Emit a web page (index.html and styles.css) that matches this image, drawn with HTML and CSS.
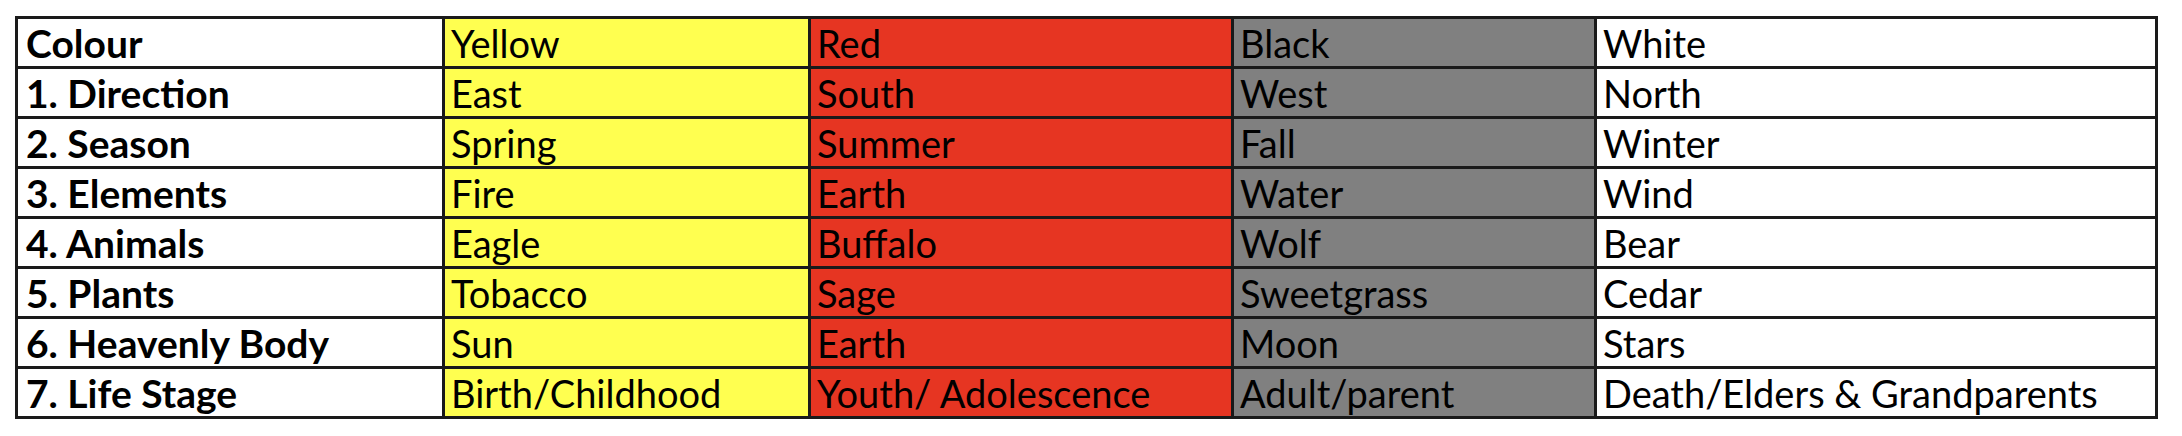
FILE: index.html
```html
<!DOCTYPE html>
<html>
<head>
<meta charset="utf-8">
<link rel="stylesheet" href="styles.css">
</head>
<body>
<table class="grid">
  <colgroup>
    <col class="c-head">
    <col class="c-yellow">
    <col class="c-red">
    <col class="c-black">
    <col class="c-white">
  </colgroup>
  <tbody>
    <tr><th>Colour</th><td class="y">Yellow</td><td class="r">Red</td><td class="k">Black</td><td class="w">White</td></tr>
    <tr><th>1. Direction</th><td class="y">East</td><td class="r">South</td><td class="k">West</td><td class="w">North</td></tr>
    <tr><th>2. Season</th><td class="y">Spring</td><td class="r">Summer</td><td class="k">Fall</td><td class="w">Winter</td></tr>
    <tr><th>3. Elements</th><td class="y">Fire</td><td class="r">Earth</td><td class="k">Water</td><td class="w">Wind</td></tr>
    <tr><th>4. Animals</th><td class="y">Eagle</td><td class="r">Buffalo</td><td class="k">Wolf</td><td class="w">Bear</td></tr>
    <tr><th>5. Plants</th><td class="y">Tobacco</td><td class="r">Sage</td><td class="k">Sweetgrass</td><td class="w">Cedar</td></tr>
    <tr><th>6. Heavenly Body</th><td class="y">Sun</td><td class="r">Earth</td><td class="k">Moon</td><td class="w">Stars</td></tr>
    <tr><th>7. Life Stage</th><td class="y">Birth/Childhood</td><td class="r">Youth/ Adolescence</td><td class="k">Adult/parent</td><td class="w">Death/Elders &amp; Grandparents</td></tr>
  </tbody>
</table>
</body>
</html>
```

FILE: styles.css
```css
html, body {
  margin: 0;
  padding: 0;
  background: #ffffff;
}

body {
  padding: 16px 0 0 15px;
  font-family: Lato, "Liberation Sans", sans-serif;
  color: #000000;
}

.grid {
  border-collapse: collapse;
  table-layout: fixed;
  width: 2140px;
  border: 3px solid #1a1a1a;
}

.c-head { width: 427px; }
.c-yellow { width: 366px; }
.c-red { width: 423px; }
.c-black { width: 363px; }
.c-white { width: 561px; }

.grid th,
.grid td {
  border: 3px solid #1a1a1a;
  height: 46px;
  padding: 1px 0 0 6px;
  text-align: left;
  vertical-align: middle;
  font-size: 38px;
  line-height: 44px;
  white-space: nowrap;
  overflow: hidden;
}

.grid th {
  font-weight: 700;
  font-size: 39px;
  background: #ffffff;
  padding-left: 8px;
}

.grid td {
  font-weight: 400;
}

.y { background: #ffff50; }
.r { background: #e63522; }
.k { background: #808080; }
.w { background: #ffffff; }
```
